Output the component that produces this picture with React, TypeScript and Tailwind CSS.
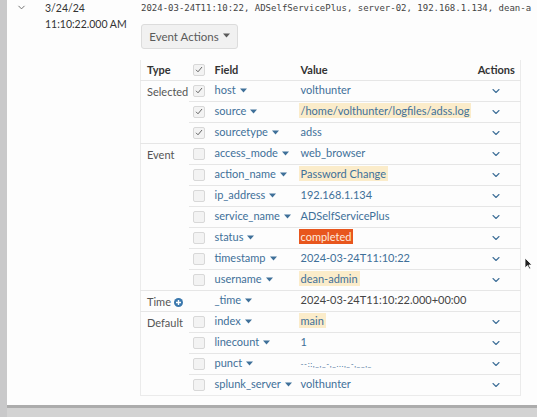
import { ChevronDown } from "lucide-react";

type Row = {
  field: string;
  value: string;
  checked?: boolean;
  hl?: "beige" | "orange";
  plain?: boolean;
  noBox?: boolean;
  noAction?: boolean;
  small?: boolean;
};

const groups: { type: string; plus?: boolean; rows: Row[] }[] = [
  {
    type: "Selected",
    rows: [
      { field: "host", value: "volthunter", checked: true },
      { field: "source", value: "/home/volthunter/logfiles/adss.log", checked: true, hl: "beige" },
      { field: "sourcetype", value: "adss", checked: true },
    ],
  },
  {
    type: "Event",
    rows: [
      { field: "access_mode", value: "web_browser" },
      { field: "action_name", value: "Password Change", hl: "beige" },
      { field: "ip_address", value: "192.168.1.134" },
      { field: "service_name", value: "ADSelfServicePlus" },
      { field: "status", value: "completed", hl: "orange" },
      { field: "timestamp", value: "2024-03-24T11:10:22" },
      { field: "username", value: "dean-admin", hl: "beige" },
    ],
  },
  {
    type: "Time",
    plus: true,
    rows: [{ field: "_time", value: "2024-03-24T11:10:22.000+00:00", plain: true, noBox: true, noAction: true }],
  },
  {
    type: "Default",
    rows: [
      { field: "index", value: "main", hl: "beige" },
      { field: "linecount", value: "1" },
      { field: "punct", value: "--::,_,_-,_...,_-,__,_", small: true },
      { field: "splunk_server", value: "volthunter" },
    ],
  },
];

const Caret = () => (
  <svg width="7" height="5" viewBox="0 0 7 5" className="inline-block ml-[4px] mb-[2px]">
    <path d="M0 0.5 L7 0.5 L3.5 4.5 Z" fill="currentColor" />
  </svg>
);

const Box = ({ checked }: { checked?: boolean }) => (
  <span className="flex w-[12px] h-[12px] items-center justify-center rounded-[2px] border border-[#d8d8d8] bg-[#f3f3f3]">
    {checked && (
      <svg width="8" height="7" viewBox="0 0 8 7">
        <path d="M1 3.8 L3 5.8 L7 1" stroke="#666" strokeWidth="1" fill="none" />
      </svg>
    )}
  </span>
);

function Value({ row }: { row: Row }) {
  if (row.hl === "beige")
    return <span className="bg-[#fbecca] px-[2px] py-[1px] text-[#3f7099]">{row.value}</span>;
  if (row.hl === "orange")
    return <span className="bg-[#e8561d] px-[2px] py-[1px] text-[#fde9dc]">{row.value}</span>;
  if (row.plain) return <span className="pl-[2px] text-[#444]">{row.value}</span>;
  if (row.small)
    return <span className="pl-[2px] text-[8px] tracking-[0.6px] text-[#3f7099]">{row.value}</span>;
  return <span className="pl-[2px] text-[#3f7099]">{row.value}</span>;
}

export default function App() {
  return (
    <div className="relative flex w-[537px] h-[417px] overflow-hidden bg-[#d3d3d3] font-['Lato',sans-serif] text-[11px]">
      <div className="w-[7px] shrink-0 bg-[#c9c9ca]" />
      <div className="flex-1 min-w-0">
        <div className="h-[408px] border-b-[3px] border-[#acacac] bg-[#fdfdfd]">
          <div className="flex">
            <div className="w-[38px] shrink-0 pl-[9px] pt-[2px]">
              <ChevronDown size={11} strokeWidth={2} color="#666" />
            </div>
            <div className="w-[95px] shrink-0 text-[10.5px] leading-[16px] text-[#333]">
              3/24/24
              <br />
              11:10:22.000 AM
            </div>
            <div className="flex-1 min-w-0 overflow-hidden">
              <div className="whitespace-nowrap font-['DejaVu_Sans_Mono',monospace] text-[9px] leading-[16px] text-[#444] pl-[1px]">
                2024-03-24T11:10:22, ADSelfServicePlus, server-02, 192.168.1.134, dean-a
              </div>
              <button className="mt-[8px] ml-[1px] flex h-[25px] w-[97px] items-center justify-center rounded-[3px] border border-[#dcdcdc] bg-[#f1f1f1] text-[11.5px] text-[#5a5a5a]">
                Event Actions
                <Caret />
              </button>
              <table className="mt-[11px] w-[380px] border-collapse border-x border-b border-[#ebebeb] table-fixed">
                <colgroup>
                  <col className="w-[48px]" />
                  <col className="w-[21px]" />
                  <col className="w-[87px]" />
                  <col className="w-[176px]" />
                  <col className="w-[48px]" />
                </colgroup>
                <thead>
                  <tr className="h-[20px] text-left text-[#333]">
                    <th className="pl-[6px] font-bold">Type</th>
                    <th className="pl-[4px]">
                      <Box checked />
                    </th>
                    <th className="pl-[5px] font-bold">Field</th>
                    <th className="pl-[4px] font-bold">Value</th>
                    <th className="text-center font-bold">Actions</th>
                  </tr>
                </thead>
                <tbody>
                  {groups.map((g) =>
                    g.rows.map((row, i) => (
                      <tr key={row.field} className="h-[21px]">
                        {i === 0 && (
                          <td
                            rowSpan={g.rows.length}
                            className="border-t border-[#e6e6e6] pl-[6px] pt-[3px] align-top whitespace-nowrap text-[#555]"
                          >
                            {g.type}
                            {g.plus && (
                              <svg width="9" height="9" viewBox="0 0 9 9" className="ml-[3px] inline-block mb-[1px]">
                                <circle cx="4.5" cy="4.5" r="4.5" fill="#3b78ad" />
                                <path d="M4.5 2 V7 M2 4.5 H7" stroke="#fff" strokeWidth="1.4" />
                              </svg>
                            )}
                          </td>
                        )}
                        <td className="border-t border-[#e6e6e6] pl-[4px]">
                          {!row.noBox && <Box checked={row.checked} />}
                        </td>
                        <td className="border-t border-[#e6e6e6] pl-[5px] whitespace-nowrap text-[#3f7099]">
                          {row.field}
                          <Caret />
                        </td>
                        <td className="border-t border-[#e6e6e6] pl-[2px] whitespace-nowrap">
                          <Value row={row} />
                        </td>
                        <td className="border-t border-[#e6e6e6] text-center">
                          {!row.noAction && (
                            <ChevronDown size={12} strokeWidth={2.2} color="#3f7099" className="inline-block" />
                          )}
                        </td>
                      </tr>
                    ))
                  )}
                </tbody>
              </table>
            </div>
          </div>
        </div>
      </div>
      <svg width="9" height="13" viewBox="0 0 9 13" className="absolute left-[524px] top-[257px]">
        <path d="M1 1 L1 11 L3.5 8.6 L5.3 12 L6.6 11.3 L4.9 8 L8 8 Z" fill="#222" stroke="#fff" strokeWidth="0.8" />
      </svg>
    </div>
  );
}
